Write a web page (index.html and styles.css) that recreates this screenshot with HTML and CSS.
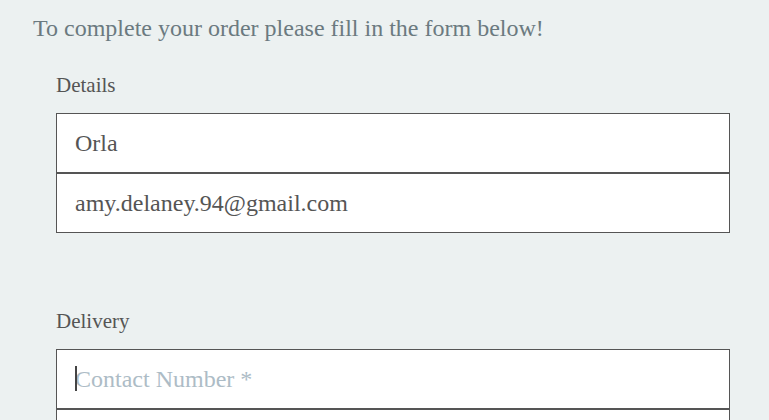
FILE: index.html
```html
<!DOCTYPE html>
<html lang="en">
<head>
<meta charset="utf-8">
<title>Checkout</title>
<link rel="stylesheet" href="styles.css">
</head>
<body>
<main class="page">
  <p class="intro">To complete your order please fill in the form below!</p>
  <section class="group">
    <h2 class="group-label">Details</h2>
    <div class="fields">
      <input class="field" type="text" value="Orla">
      <input class="field" type="email" value="amy.delaney.94@gmail.com">
    </div>
  </section>
  <section class="group group-delivery">
    <h2 class="group-label">Delivery</h2>
    <div class="fields">
      <div class="field-wrap">
        <input class="field" type="tel" placeholder="Contact Number *">
        <span class="caret"></span>
      </div>
      <input class="field" type="text" placeholder="Address">
    </div>
  </section>
</main>
</body>
</html>
```
FILE: styles.css
```css
html, body {
  margin: 0;
  padding: 0;
  background: #ecf1f1;
}
body {
  font-family: "Liberation Serif", "Times New Roman", serif;
  color: #555;
}
.page {
  padding: 13px 39px 0 33px;
}
.intro {
  margin: 0;
  font-size: 24px;
  line-height: 30px;
  color: #6b7a80;
}
.group {
  margin: 0 0 0 23px;
}
.group-label {
  margin: 0;
  padding-top: 29px;
  font-size: 21px;
  font-weight: normal;
  line-height: 26px;
  color: #555;
}
.fields {
  display: flex;
  flex-direction: column;
  margin-top: 15px;
}
.field-wrap {
  position: relative;
}
.field {
  display: block;
  box-sizing: border-box;
  width: 100%;
  height: 60px;
  margin: 0;
  padding: 0 18px;
  border: 1px solid #555;
  border-radius: 0;
  background: #fff;
  font-family: "Liberation Serif", "Times New Roman", serif;
  font-size: 24px;
  color: #555;
  outline: none;
}
.field::placeholder {
  color: #adbcc6;
  opacity: 1;
}
.group-delivery {
  margin-top: 46px;
}
.caret {
  position: absolute;
  left: 19px;
  top: 17px;
  width: 2px;
  height: 25px;
  background: #444;
}
```
